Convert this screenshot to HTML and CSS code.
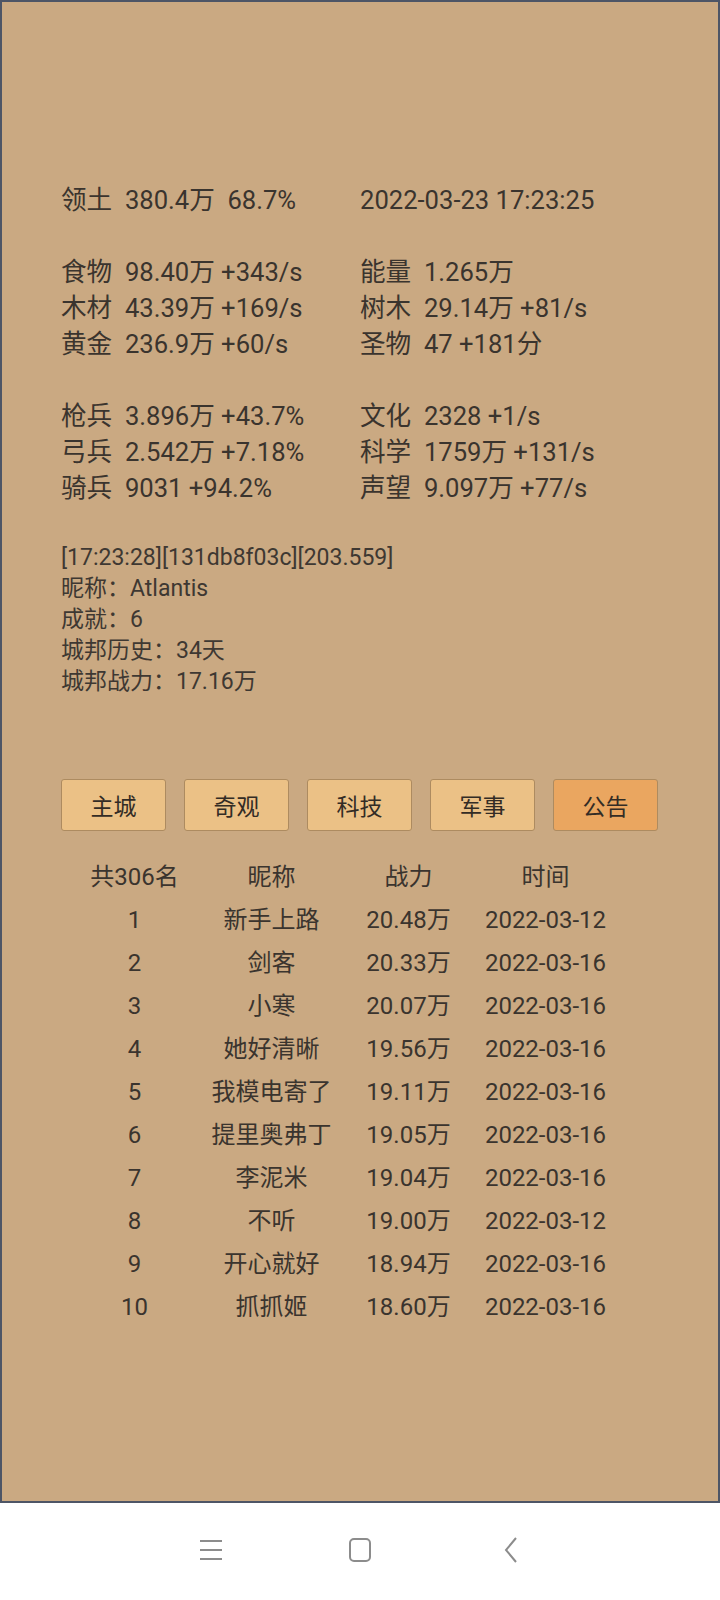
FILE: index.html
```html
<!DOCTYPE html>
<html lang="zh">
<head>
  <meta charset="UTF-8">
  <title>城邦</title>
  <meta name="viewport" content="width=device-width, initial-scale=1.0">
  <link rel="stylesheet" href="styles.css">
</head>
<body>
  <div class="screen">
    <main class="panel">
      <!-- Resource overview -->
      <section class="stats">
        <div class="stat-row">
          <span>领土&nbsp;&nbsp;380.4万&nbsp;&nbsp;68.7%</span>
          <span>2022-03-23 17:23:25</span>
        </div>
      </section>

      <section class="stats">
        <div class="stat-row">
          <span>食物&nbsp;&nbsp;98.40万 +343/s</span>
          <span>能量&nbsp;&nbsp;1.265万</span>
        </div>
        <div class="stat-row">
          <span>木材&nbsp;&nbsp;43.39万 +169/s</span>
          <span>树木&nbsp;&nbsp;29.14万 +81/s</span>
        </div>
        <div class="stat-row">
          <span>黄金&nbsp;&nbsp;236.9万 +60/s</span>
          <span>圣物&nbsp;&nbsp;47 +181分</span>
        </div>
      </section>

      <section class="stats">
        <div class="stat-row">
          <span>枪兵&nbsp;&nbsp;3.896万 +43.7%</span>
          <span>文化&nbsp;&nbsp;2328 +1/s</span>
        </div>
        <div class="stat-row">
          <span>弓兵&nbsp;&nbsp;2.542万 +7.18%</span>
          <span>科学&nbsp;&nbsp;1759万 +131/s</span>
        </div>
        <div class="stat-row">
          <span>骑兵&nbsp;&nbsp;9031 +94.2%</span>
          <span>声望&nbsp;&nbsp;9.097万 +77/s</span>
        </div>
      </section>

      <!-- City info -->
      <section class="info">
        <p>[17:23:28][131db8f03c][203.559]</p>
        <p>昵称：Atlantis</p>
        <p>成就：6</p>
        <p>城邦历史：34天</p>
        <p>城邦战力：17.16万</p>
      </section>

      <nav class="tabs">
        <button class="tab">主城</button>
        <button class="tab">奇观</button>
        <button class="tab">科技</button>
        <button class="tab">军事</button>
        <button class="tab active">公告</button>
      </nav>

      <!-- Ranking -->
      <section class="ranking">
        <div class="rank-row head"><span>共306名</span><span>昵称</span><span>战力</span><span>时间</span></div>
        <div class="rank-row"><span>1</span><span>新手上路</span><span>20.48万</span><span>2022-03-12</span></div>
        <div class="rank-row"><span>2</span><span>剑客</span><span>20.33万</span><span>2022-03-16</span></div>
        <div class="rank-row"><span>3</span><span>小寒</span><span>20.07万</span><span>2022-03-16</span></div>
        <div class="rank-row"><span>4</span><span>她好清晰</span><span>19.56万</span><span>2022-03-16</span></div>
        <div class="rank-row"><span>5</span><span>我模电寄了</span><span>19.11万</span><span>2022-03-16</span></div>
        <div class="rank-row"><span>6</span><span>提里奥弗丁</span><span>19.05万</span><span>2022-03-16</span></div>
        <div class="rank-row"><span>7</span><span>李泥米</span><span>19.04万</span><span>2022-03-16</span></div>
        <div class="rank-row"><span>8</span><span>不听</span><span>19.00万</span><span>2022-03-12</span></div>
        <div class="rank-row"><span>9</span><span>开心就好</span><span>18.94万</span><span>2022-03-16</span></div>
        <div class="rank-row"><span>10</span><span>抓抓姬</span><span>18.60万</span><span>2022-03-16</span></div>
      </section>
    </main>

    <!-- System navigation bar -->
    <footer class="sysnav">
      <svg class="navicon" width="24" height="24" viewBox="0 0 24 24">
        <path d="M1 3h22M1 12h22M1 21h22" stroke="#8c8c8c" stroke-width="2" fill="none"/>
      </svg>
      <svg class="navicon" width="24" height="26" viewBox="0 0 24 26">
        <rect x="2" y="2" width="20" height="22" rx="4" stroke="#8c8c8c" stroke-width="2" fill="none"/>
      </svg>
      <svg class="navicon back" width="16" height="26" viewBox="0 0 16 26">
        <path d="M13 1L3 13l10 12" stroke="#8c8c8c" stroke-width="2" fill="none"/>
      </svg>
    </footer>
  </div>
</body>
</html>
```

FILE: styles.css
```css
/* Base */
* {
  margin: 0;
  padding: 0;
  box-sizing: border-box;
}

body {
  background-color: #ffffff;
  font-family: Roboto, "Noto Sans CJK SC", sans-serif;
  color: #3a342e;
}

.screen {
  width: 720px;
  height: 1600px;
  display: flex;
  flex-direction: column;
}

/* Game panel */
.panel {
  flex: 1;
  background-color: #caa982;
  border: 2px solid #4d5566;
  padding: 180px 0 0 59px;
}

.stats {
  margin-bottom: 36px;
}

.stat-row {
  display: grid;
  grid-template-columns: 299px 1fr;
  font-size: 25.6px;
  line-height: 36px;
  white-space: nowrap;
}

.info {
  margin-top: 6px;
  font-size: 23px;
  line-height: 31px;
  color: #3e3832;
}

/* Tabs */
.tabs {
  display: flex;
  gap: 18px;
  margin-top: 82px;
}

.tab {
  width: 105px;
  height: 52px;
  background-color: #ebc186;
  border: 1.5px solid #ad8b60;
  border-radius: 3px;
  font-family: "Noto Sans CJK SC", sans-serif;
  font-size: 23px;
  color: #332c25;
}

.tab.active {
  background-color: #eaa660;
}

/* Ranking table */
.ranking {
  margin-top: 25px;
  margin-left: 5px;
}

.rank-row {
  display: grid;
  grid-template-columns: repeat(4, 137px);
  font-size: 24px;
  line-height: 43px;
  text-align: center;
  white-space: nowrap;
}

/* Android nav bar */
.sysnav {
  height: 97px;
  display: flex;
  align-items: center;
  gap: 125px;
  padding: 0 0 4px 199px;
}

.back {
  margin-left: 6px;
}
```
